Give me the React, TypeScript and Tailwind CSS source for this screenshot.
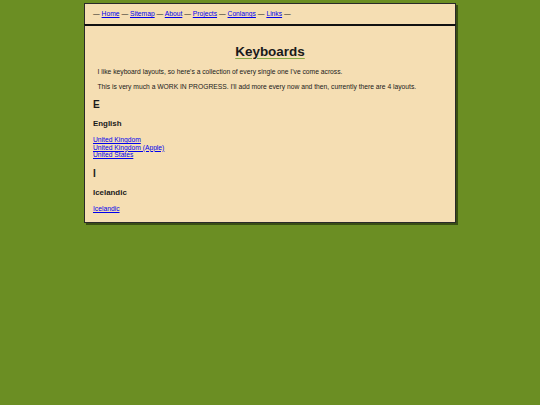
const navLinks = ['Home', 'Sitemap', 'About', 'Projects', 'Conlangs', 'Links'];

const sections = [
    { letter: 'E', groups: [{ name: 'English', layouts: ['United Kingdom', 'United Kingdom (Apple)', 'United States'] }] },
    { letter: 'I', groups: [{ name: 'Icelandic', layouts: ['Icelandic'] }] },
];

export default function App() {
    return (
        <div className="min-h-[405px] w-full bg-[#6b8e23] pt-[3px] text-[#1a1a1a] text-[6.73px] leading-[1.15]" style={{ fontFamily: '"Liberation Sans", Arial, sans-serif' }}>
            <div className="w-[372px] mx-auto shadow-[2px_2px_0_rgba(0,0,0,0.45)]">
                <header className="bg-[#f5deb3] border border-[#2a2a2a] border-b-0 px-[8px] h-[21px] flex items-center">
                    <p>
                        {navLinks.map(link => (
                            <span key={link}>
                                — <a href="#" className="text-[#0000ee] underline">{link}</a>{' '}
                            </span>
                        ))}
                        —
                    </p>
                </header>
                <main className="bg-[#f5deb3] border border-[#2a2a2a] border-t-2 border-t-[#111] px-[8px] pt-[9px] pb-[1.5px]">
                    <h1 className="text-center text-[13.46px] font-bold my-[9px] underline decoration-[#8aaa44] decoration-[1.2px] underline-offset-[1.5px]">
                        Keyboards
                    </h1>
                    <p className="pl-[4.5px] my-[6.73px]">
                        I like keyboard layouts, so here's a collection of every single one I've come across.
                    </p>
                    <p className="pl-[4.5px] my-[6.73px]">
                        This is very much a WORK IN PROGRESS. I'll add more every now and then, currently there are 4 layouts.
                    </p>
                    {sections.map(section => (
                        <section key={section.letter}>
                            <h2 className="text-[10.1px] font-bold my-[8.4px]">{section.letter}</h2>
                            {section.groups.map(group => (
                                <div key={group.name}>
                                    <h3 className="text-[7.9px] font-bold my-[7.9px]">{group.name}</h3>
                                    <div className="my-[7.9px] flex flex-col items-start">
                                        {group.layouts.map(layout => (
                                            <a key={layout} href="#" className="text-[#0000ee] underline">{layout}</a>
                                        ))}
                                    </div>
                                </div>
                            ))}
                        </section>
                    ))}
                </main>
            </div>
        </div>
    );
}
